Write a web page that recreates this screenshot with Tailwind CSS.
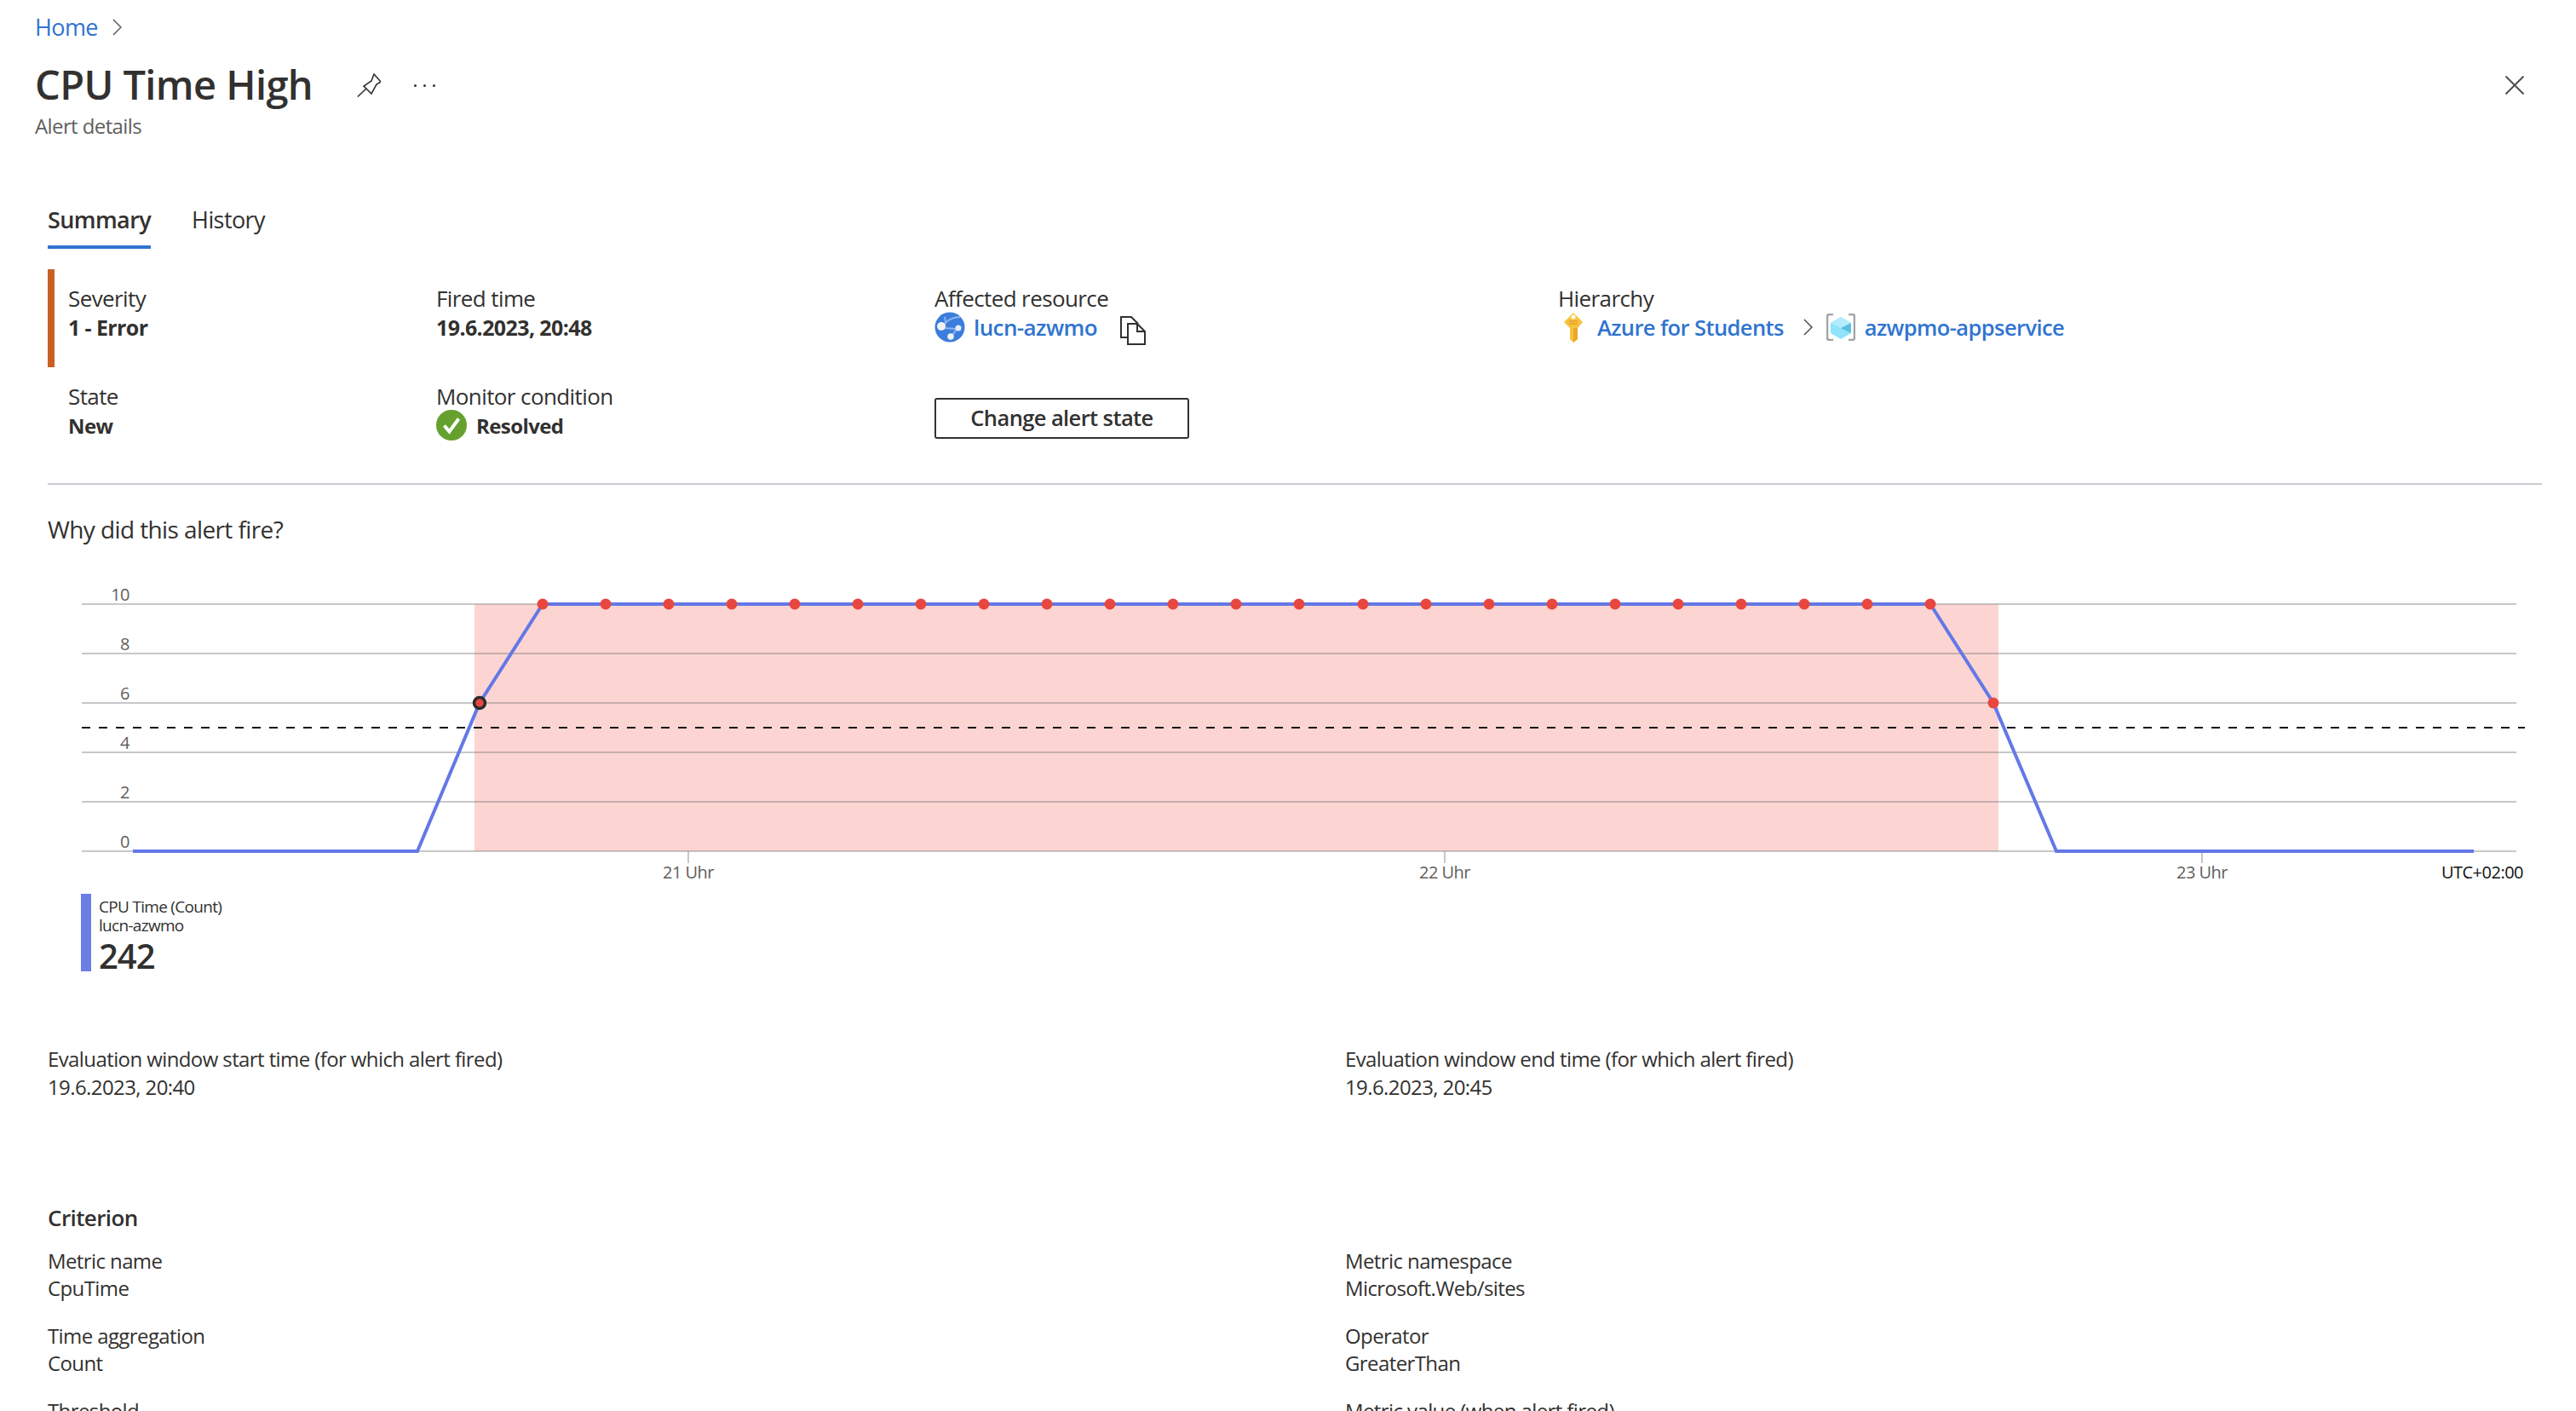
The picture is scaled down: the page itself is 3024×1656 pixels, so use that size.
<!DOCTYPE html>
<html lang="en">
<head>
    <meta charset="UTF-8">
    <title>CPU Time High - Alert details</title>
    <script src="https://cdn.jsdelivr.net/npm/@tailwindcss/browser@4"></script>
</head>
<body class="bg-white text-[#323130] font-['Open_Sans',sans-serif] text-[24px] tracking-[-0.6px] overflow-hidden">
<div class="h-[1656px] overflow-hidden">

    <!-- Breadcrumb + title -->
    <header class="pt-4 pl-[41px] pr-[61px]">
        <div class="flex items-center h-8">
            <a class="text-[#2f74d0] text-[27px]">Home</a>
            <svg class="ml-[17px]" width="11" height="20" viewBox="0 0 11 20" fill="none" stroke="#605e5c" stroke-width="1.5"><path d="M1 1l9 9-9 9"/></svg>
        </div>
        <div class="flex items-center h-14 mt-6">
            <h1 class="text-[47px] font-semibold pb-[2px]">CPU Time High</h1>
            <svg class="ml-[52px]" width="28" height="28" viewBox="0 0 28 28" fill="none" stroke="#323130" stroke-width="1.6"><path d="M0.8 27.5L11 18M20 1L28 10 23 13 17 24 8 15 17 9Z"/></svg>
            <div class="flex gap-2 ml-[39px]">
                <span class="w-[3px] h-[3px] rounded-full bg-[#323130]"></span>
                <span class="w-[3px] h-[3px] rounded-full bg-[#323130]"></span>
                <span class="w-[3px] h-[3px] rounded-full bg-[#323130]"></span>
            </div>
            <svg class="ml-auto" width="22" height="22" viewBox="0 0 22 22" fill="none" stroke="#505050" stroke-width="2"><path d="M0.500 0.500l21 21M21.500 0.500l-21 21"/></svg>
        </div>
        <p class="h-8 leading-8 mt-1 text-[#605e5c]">Alert details</p>
    </header>

    <main class="pl-[56px] pr-10">
        <!-- Tabs -->
        <nav class="flex gap-[48px] mt-[68px] h-[60px]">
            <div class="border-b-4 border-[#2f74d0] font-semibold text-[27px] leading-[52px] text-[#323130]">Summary</div>
            <div class="text-[27px] leading-[52px]">History</div>
        </nav>

        <!-- Essentials -->
        <section class="grid grid-cols-[456px_585px_732px_1fr] mt-6 text-[26px] leading-[33.5px] pb-[51px] border-b-2 border-[#c8ccd0]">
            <div class="h-[115px] border-l-8 border-[#ca5f25] pl-4 pt-[18px]">
                <div>Severity</div>
                <div class="font-bold text-[25px]">1 - Error</div>
            </div>
            <div class="pt-[18px]">
                <div>Fired time</div>
                <div class="font-bold text-[25px]">19.6.2023, 20:48</div>
            </div>
            <div class="pt-[18px]">
                <div>Affected resource</div>
                <div class="flex items-center h-[33.5px]">
                    <svg class="shrink-0" width="36" height="36" viewBox="0 0 36 36">
                        <circle cx="18" cy="18" r="17.500" fill="#3b7ddb"/>
                        <path d="M8 18C14 10 22 6 30 6M10 19l17 1M26 20l-6 9M12 6c2 6 1 10-3 12" fill="none" stroke="#8db6ee" stroke-width="2"/>
                        <circle cx="8" cy="17" r="5" fill="#f1f1f1"/>
                        <circle cx="28" cy="19" r="3.500" fill="#e4edf9"/>
                        <circle cx="19" cy="29" r="3.800" fill="#f1f1f1"/>
                    </svg>
                    <a class="ml-[10px] text-[#2f74d0] font-semibold">lucn-azwmo</a>
                    <svg class="ml-[27px] mt-[7px] shrink-0" width="30" height="34" viewBox="0 0 30 34" fill="none" stroke="#323130" stroke-width="2"><path d="M9 25H1V1h12l8 8"/><path d="M9 9h11l9 9v15H9zM20 9v9h9"/></svg>
                </div>
            </div>
            <div class="pt-[18px]">
                <div>Hierarchy</div>
                <div class="flex items-center h-[33.5px] text-[#2f74d0] font-semibold text-[25.5px]">
                    <svg class="ml-[6px] shrink-0" width="24" height="35" viewBox="0 0 24 35">
                        <path d="M12 0L23 11 17 18V31L12 35 8 31V18L1 11Z" fill="#f7c33c"/>
                        <path d="M12 18h5v13l-5 4z" fill="#e8a92c"/>
                        <circle cx="12" cy="5" r="2.500" fill="#fff"/>
                        <path d="M7 10h10M7 13h10" stroke="#e79b2e" stroke-width="1.500"/>
                    </svg>
                    <a class="ml-[16px]">Azure for Students</a>
                    <svg class="ml-[23px] shrink-0" width="11" height="20" viewBox="0 0 11 20" fill="none" stroke="#505050" stroke-width="1.500"><path d="M1 1l9 9-9 9"/></svg>
                    <svg class="ml-[16px] shrink-0" width="34" height="32" viewBox="0 0 34 32">
                        <path d="M8 1H2.500L1 2.500v27L2.500 31H8M26 1h5.500L33 2.500v27L31.500 31H26" fill="none" stroke="#a1a2a3" stroke-width="2.500"/>
                        <path d="M17 4l12 7v12l-12 7-12-7V11z" fill="#8fe3fb"/>
                        <path d="M17 4l12 7-12 6-12-6z" fill="#b3ecfc"/>
                        <path d="M29 11v12l-12-6z" fill="#5cbfe0"/>
                    </svg>
                    <a class="ml-[11px]">azwpmo-appservice</a>
                </div>
            </div>
            <div class="pl-6 pt-[18px]">
                <div>State</div>
                <div class="font-bold text-[24px]">New</div>
            </div>
            <div class="pt-[18px]">
                <div>Monitor condition</div>
                <div class="flex items-center h-[33.5px] font-bold text-[24px]">
                    <svg class="shrink-0" width="36" height="36" viewBox="0 0 36 36">
                        <circle cx="18" cy="18" r="18" fill="#66a12f"/>
                        <path d="M9.500 18.500l6 7L26.500 10.500" fill="none" stroke="#fff" stroke-width="4"/>
                    </svg>
                    <span class="ml-[11px]">Resolved</span>
                </div>
            </div>
            <div class="pt-9">
                <button class="w-[299px] h-12 border-2 border-[#323130] rounded-[3px] font-semibold text-[25.5px]">Change alert state</button>
            </div>
            <div></div>
        </section>

        <h2 class="mt-[35px] text-[28px] leading-[34px]">Why did this alert fire?</h2>

        <!-- Chart -->
        <svg class="block mt-[44px]" width="2928" height="360" viewBox="56 680 2928 360" font-family="Open Sans, sans-serif" font-size="20" letter-spacing="-0.5">
            <rect x="557" y="707" width="1789" height="290" fill="#f04b3e" fill-opacity="0.23"/>
            <g stroke="#7d7d7d" stroke-opacity="0.42" stroke-width="2">
                <path d="M96 707H2954M96 765H2954M96 823H2954M96 881H2954M96 939H2954M96 997H2954"/>
                <path d="M808 997v14M1696 997v14M2585 997v14"/>
            </g>
            <path d="M96 852H2964" stroke="#111" stroke-width="2" stroke-dasharray="10 10"/>
            <path d="M156 997H490L563 823 637 707H2266L2340 823 2414 997H2904" fill="none" stroke="#6478e6" stroke-width="4"/>
            <g fill="#605e5c" text-anchor="end">
                <text x="152" y="703">10</text>
                <text x="152" y="761">8</text>
                <text x="152" y="819">6</text>
                <text x="152" y="877">4</text>
                <text x="152" y="935">2</text>
                <text x="152" y="993">0</text>
            </g>
            <g fill="#605e5c" text-anchor="middle">
                <text x="808" y="1029">21 Uhr</text>
                <text x="1696" y="1029">22 Uhr</text>
                <text x="2585" y="1029">23 Uhr</text>
            </g>
            <text x="2962" y="1029" text-anchor="end" fill="#111">UTC+02:00</text>
            <circle cx="563" cy="823" r="6.500" fill="#e8473f" stroke="#2b2b2b" stroke-width="3.500"/>
            <g id="dots" fill="#e8473f">
                <circle cx="2340" cy="823" r="6.500"/>
                <circle cx="637" cy="707" r="6.500"/><circle cx="711" cy="707" r="6.500"/><circle cx="785" cy="707" r="6.500"/><circle cx="859" cy="707" r="6.500"/>
                <circle cx="933" cy="707" r="6.500"/><circle cx="1007" cy="707" r="6.500"/><circle cx="1081" cy="707" r="6.500"/><circle cx="1155" cy="707" r="6.500"/>
                <circle cx="1229" cy="707" r="6.500"/><circle cx="1303" cy="707" r="6.500"/><circle cx="1377" cy="707" r="6.500"/><circle cx="1451" cy="707" r="6.500"/>
                <circle cx="1525" cy="707" r="6.500"/><circle cx="1600" cy="707" r="6.500"/><circle cx="1674" cy="707" r="6.500"/><circle cx="1748" cy="707" r="6.500"/>
                <circle cx="1822" cy="707" r="6.500"/><circle cx="1896" cy="707" r="6.500"/><circle cx="1970" cy="707" r="6.500"/><circle cx="2044" cy="707" r="6.500"/>
                <circle cx="2118" cy="707" r="6.500"/><circle cx="2192" cy="707" r="6.500"/><circle cx="2266" cy="707" r="6.500"/>
            </g>
        </svg>

        <!-- Legend -->
        <div class="flex ml-[39px] mt-[7px] h-[91px] border-l-[12px] border-[#6a7ee6] pl-[9px]">
            <div>
                <div class="text-[19px] leading-[22px] mt-[4px] font-medium tracking-[-0.7px]">CPU Time (Count)</div>
                <div class="text-[19px] leading-[22px] tracking-[-0.7px]">lucn-azwmo</div>
                <div class="text-[40px] leading-[50px] font-semibold tracking-[-1px]">242</div>
            </div>
        </div>

        <!-- Evaluation window -->
        <section class="grid grid-cols-[1523px_1fr] mt-[86px] leading-[33px]">
            <div>
                <div>Evaluation window start time (for which alert fired)</div>
                <div>19.6.2023, 20:40</div>
            </div>
            <div>
                <div>Evaluation window end time (for which alert fired)</div>
                <div>19.6.2023, 20:45</div>
            </div>
        </section>

        <h2 class="mt-[117px] text-[26px] leading-10 font-semibold">Criterion</h2>

        <!-- Criterion details -->
        <section class="grid grid-cols-[1523px_1fr] gap-y-6 mt-[15px] leading-8">
            <div><div>Metric name</div><div>CpuTime</div></div>
            <div><div>Metric namespace</div><div>Microsoft.Web/sites</div></div>
            <div><div>Time aggregation</div><div>Count</div></div>
            <div><div>Operator</div><div>GreaterThan</div></div>
            <div><div>Threshold</div><div>5</div></div>
            <div><div>Metric value (when alert fired)</div><div>6</div></div>
        </section>
    </main>
</div>
</body>
</html>
